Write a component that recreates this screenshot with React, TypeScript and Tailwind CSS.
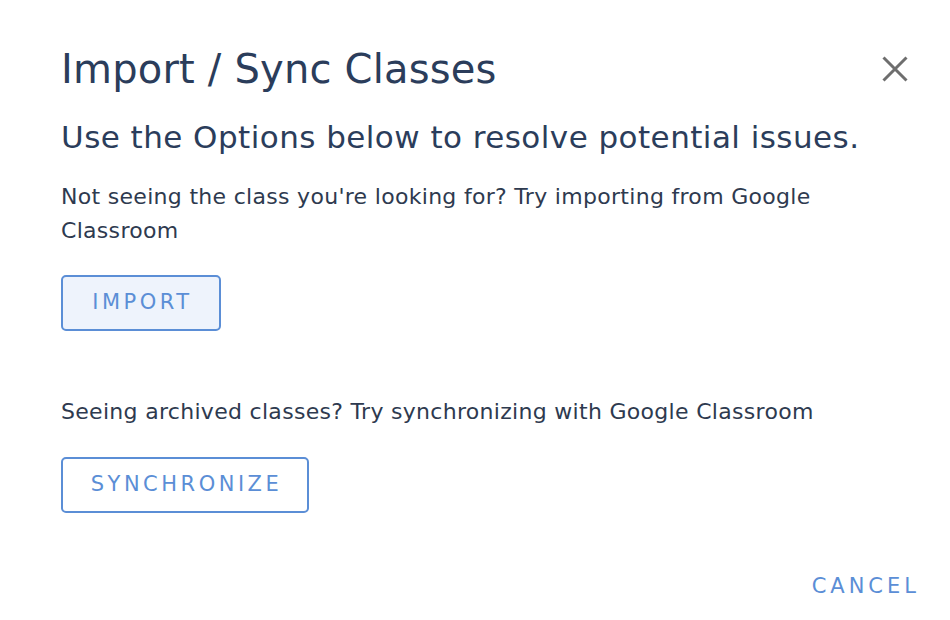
import React from 'react';

const font = { fontFamily: '"DejaVu Sans", "Open Sans", sans-serif' };

const App: React.FC = () => {
  return (
    <div className="w-[950px] h-[620px] bg-white text-[#2e3a4f] relative" style={font}>
      <div className="pl-[61px] pr-[42px] pt-[43px]">
        <div className="flex items-center justify-between">
          <h1 className="text-[40px] leading-[52px] tracking-[0.2px] font-normal text-[#2b3d5b]">Import / Sync Classes</h1>
          <button className="w-[26px] h-[26px] text-[#6e6e6e]" aria-label="Close">
            <svg viewBox="0 0 26 26" className="w-[26px] h-[26px]" fill="none" stroke="currentColor" strokeWidth="3">
              <path d="M1.5 1.5 L24.5 24.5 M24.5 1.5 L1.5 24.5" />
            </svg>
          </button>
        </div>
        <h2 className="mt-[22px] text-[31px] leading-[40px] tracking-[0.45px] font-normal text-[#2b3d5b]">
          Use the Options below to resolve potential issues.
        </h2>
        <p className="mt-[23px] w-[790px] text-[22px] leading-[34px] tracking-[0.3px]">
          Not seeing the class you're looking for? Try importing from Google Classroom
        </p>
        <button className="mt-[27px] w-[160px] h-[56px] pl-[3px] rounded-[5px] border-2 border-[#5b8ed6] bg-[#eef3fc] text-[#5b8ed6] text-[21px] tracking-[3.5px]">
          IMPORT
        </button>
        <p className="mt-[64px] text-[22px] leading-[34px] tracking-[0.3px]">
          Seeing archived classes? Try synchronizing with Google Classroom
        </p>
        <button className="mt-[28px] w-[248px] h-[56px] pl-[3px] rounded-[5px] border-2 border-[#5b8ed6] bg-white text-[#5b8ed6] text-[21px] tracking-[3.5px]">
          SYNCHRONIZE
        </button>
      </div>
      <div className="absolute right-[30px] bottom-[20px]">
        <button className="text-[21px] leading-[28px] tracking-[4px] text-[#5b8ed6]">CANCEL</button>
      </div>
    </div>
  );
};

export default App;
